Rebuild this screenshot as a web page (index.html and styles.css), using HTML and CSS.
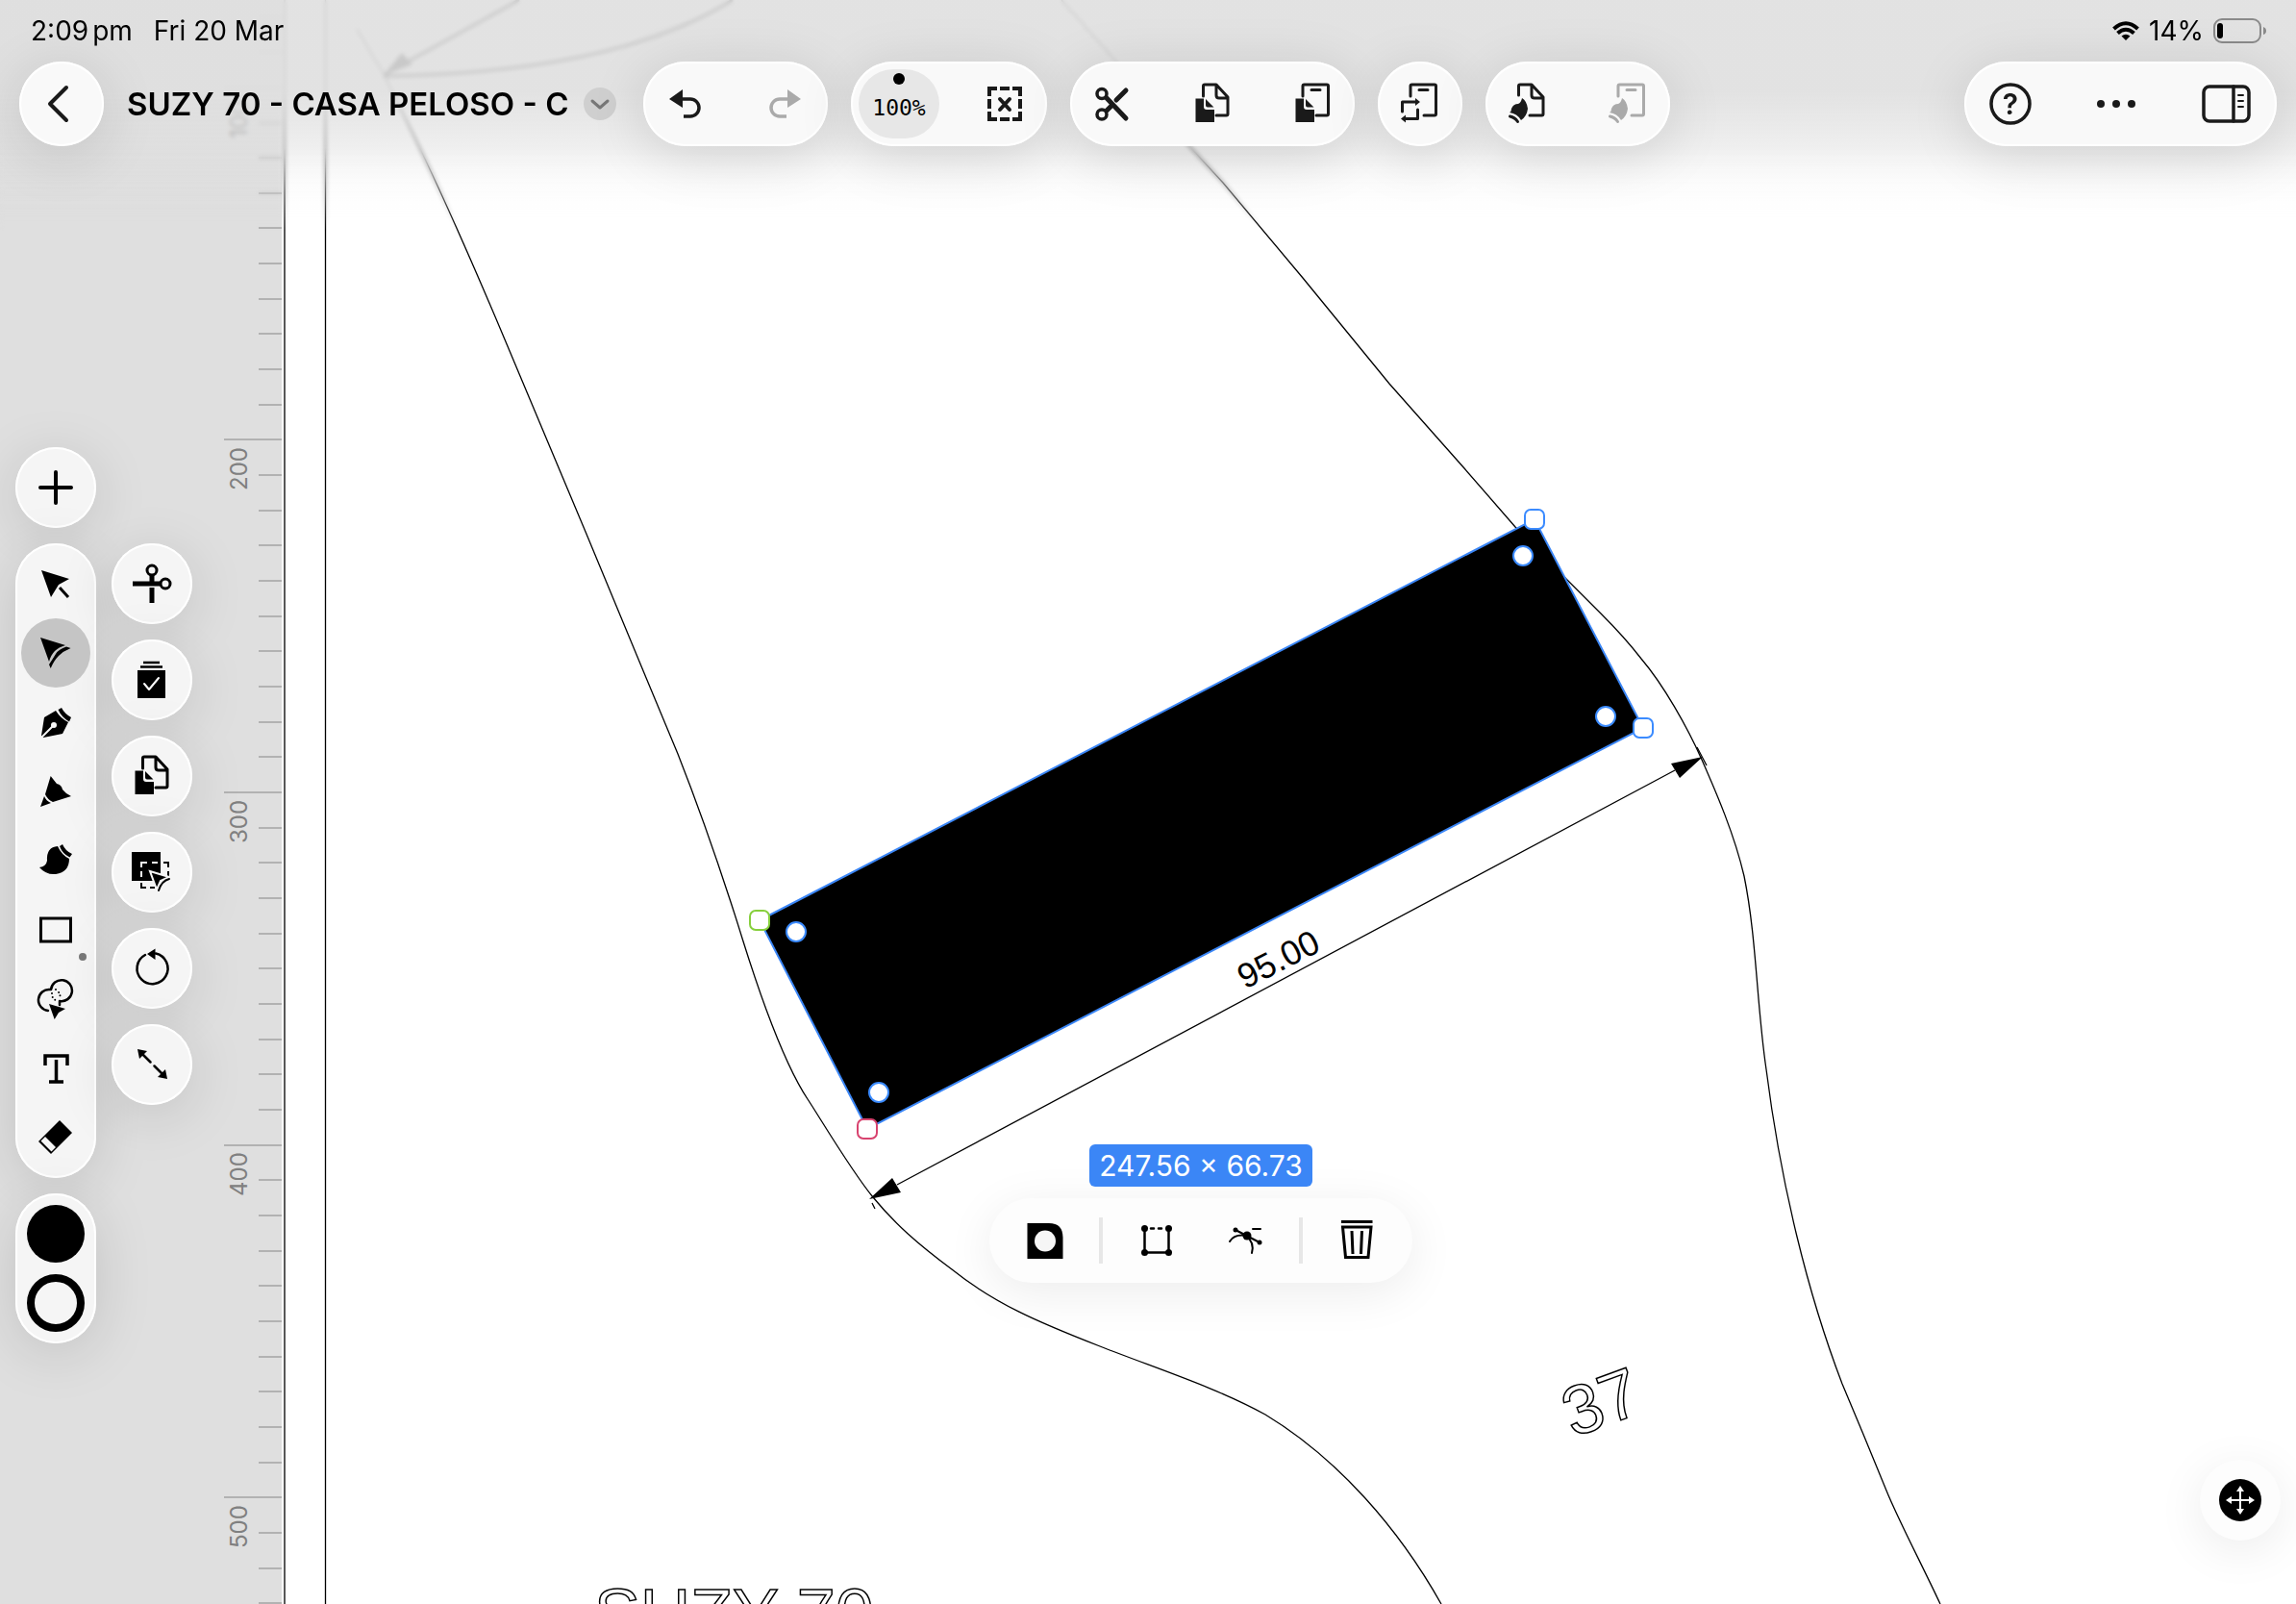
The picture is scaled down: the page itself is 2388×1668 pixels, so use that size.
FILE: index.html
```html
<!DOCTYPE html>
<html lang="en">
<head>
<meta charset="utf-8">
<title>SUZY 70 - CASA PELOSO - C</title>
<link rel="stylesheet" href="styles.css">
</head>
<body>
<svg class="defs" aria-hidden="true">
  <symbol id="copy" viewBox="0 0 48 48">
    <path class="line" d="M14.5 16V5.5q0-1.5 1.5-1.5H28L40 17v17.5q0 1.5-1.5 1.5H28M28 4v11q0 3 3 3h9"/>
    <path d="M6.5 18.5H15V27q0 3 3 3h8v13H6.5zM17 19l8.5 8.5H19q-2 0-2-2z"/>
  </symbol>
  <symbol id="board" viewBox="0 0 48 48">
    <path class="line" d="M14 16V5.5q0-1.5 1.5-1.5H39q1.5 0 1.5 1.5V34.5q0 1.5-1.5 1.5H28M23 9.5h9"/>
  </symbol>
  <symbol id="brushmark" viewBox="0 0 48 48">
    <path d="M18 18q-1 5-4 6q-5 0-7 5q0 3-2 4q8 1 12 8q6-4 7-12q-1-8-6-11z"/>
    <path class="line" d="M5.5 37q5 1 8 5.5"/>
  </symbol>
</svg>

<main class="app">
  <svg class="canvas" viewBox="0 0 2388 1668" preserveAspectRatio="xMinYMin slice" role="img" aria-label="Drawing canvas">
    <rect class="paper" x="293" y="0" width="2200" height="1668"/>
    <path class="ticks" d="M269 18h24M269 54h24M233 91h60M269 128h24M269 164h24M269 201h24M269 237h24M269 274h24M269 311h24M269 347h24M269 384h24M269 421h24M233 457h60M269 494h24M269 531h24M269 567h24M269 604h24M269 641h24M269 677h24M269 714h24M269 751h24M269 787h24M233 824h60M269 861h24M269 897h24M269 934h24M269 971h24M269 1007h24M269 1044h24M269 1081h24M269 1117h24M269 1154h24M233 1191h60M269 1227h24M269 1264h24M269 1301h24M269 1337h24M269 1374h24M269 1411h24M269 1447h24M269 1484h24M269 1521h24M233 1557h60M269 1594h24M269 1631h24M269 1667h24"/>
    <g class="ruler-text">
      <text transform="translate(257 144) rotate(-90)">100</text>
      <text transform="translate(257 510) rotate(-90)">200</text>
      <text transform="translate(257 877) rotate(-90)">300</text>
      <text transform="translate(257 1244) rotate(-90)">400</text>
      <text transform="translate(257 1610) rotate(-90)">500</text>
    </g>
    <path class="thin" d="M296 0V1668M338.5 0V1668"/>
    <path class="thin" d="M371 30L399 77L421 122C450 180 485 258 525 353L609 553L670 700L705 784C720 822 745 892 760 938S780 1004 797 1050S828 1125 840 1143S885 1217 908 1245S955 1294 990 1320C1035 1356 1080 1375 1144 1400S1265 1443 1316 1471C1392 1517 1455 1590 1499 1668"/>
    <path class="thin" d="M1104 0L1160 63L1237 152L1272 190L1355 289L1445 399L1523 487L1576 548L1630 603L1665 638Q1690 663 1707 685C1730 712 1755 756 1770 790S1804 868 1814 911C1827 975 1827 1045 1837 1112C1852 1230 1880 1345 1916 1439C1930 1472 1949 1518 1962 1550S1998 1625 2018 1668"/>
    <path class="thin faint" d="M399 78L540 0M399 79Q640 76 762 0"/>
    <path d="M399 78L418 55L429 67z"/>
    <path class="shape" d="M790 957L1596 540L1709 757L902 1174z"/>
    <path class="thin" d="M933 1232L1742 801M1765 777L1775 796M907 1251L910 1257"/>
    <path d="M904 1247L928 1225L937 1240zM1771 787L1738 794L1747 809z"/>
    <text class="measure" transform="translate(1295 1029) rotate(-27)">95.00</text>
    <text class="outlined" transform="translate(1636 1495) rotate(-20)">37</text>
    <text class="outlined" x="618" y="1703">SUZY 70</text>
    <g class="handle">
      <rect x="1586" y="530" width="20" height="20" rx="6"/>
      <rect x="1699" y="747" width="20" height="20" rx="6"/>
      <rect class="first" x="780" y="947" width="20" height="20" rx="6"/>
      <rect class="last" x="892" y="1164" width="20" height="20" rx="6"/>
      <circle cx="1584" cy="578" r="10"/><circle cx="1670" cy="745" r="10"/>
      <circle cx="828" cy="969" r="10"/><circle cx="914" cy="1136" r="10"/>
    </g>
  </svg>
  <div class="veil"></div>

  <div class="status">
    <span class="clock">2:09<span class="ampm">pm</span></span><span>Fri 20 Mar</span>
    <span class="power">
      <svg class="wifi" viewBox="0 0 28 20"><path d="M14 20L9.5 15.5Q14 12 18.5 15.5z"/><path class="arc" d="M5.5 12.5Q14 5 22.500 12.5M1.500 8Q14-3.500 26.500 8"/></svg>
      <span>14%</span>
      <svg class="battery" viewBox="0 0 56 26"><rect class="shell" x="1" y="1" width="48" height="24" rx="8"/><path class="nub" d="M52 9q3 1 3 4t-3 4z"/><rect x="4" y="5" width="6" height="16" rx="3"/></svg>
    </span>
  </div>

  <header class="bar">
    <button class="pill round" aria-label="Back"><svg class="icon" viewBox="0 0 48 48"><path class="line thick" d="M29 7L12 24L29 41"/></svg></button>
    <button class="title"><span>SUZY 70 - CASA PELOSO - C</span><svg class="chevron" viewBox="0 0 34 34"><circle cx="17" cy="17" r="17"/><path d="M9 14L17 21L25 14"/></svg></button>
    <div class="pill group">
      <button aria-label="Undo"><svg class="icon" viewBox="0 0 48 48"><path d="M7 19L21 9v19z"/><path class="line butt heavy" d="M20 19h9a9 9 0 0 1 0 18h-7"/></svg></button>
      <button aria-label="Redo" disabled><svg class="icon" viewBox="0 0 48 48"><path d="M40 19L26 9v19z"/><path class="line butt heavy" d="M27 19h-9a9 9 0 0 0 0 18h7"/></svg></button>
    </div>
    <div class="pill group">
      <button class="zoom"><span class="level">100%</span></button>
      <button aria-label="Deselect"><svg class="icon" viewBox="0 0 48 48"><path class="line butt thick" d="M8 16V8h8M19 8h10M32 8h8v8M40 19v10M40 32v8h-8M29 40H19M16 40H8v-8M8 29V19"/><path class="line thick" d="M19 19l10 11M29 19L19 30"/></svg></button>
    </div>
    <div class="pill group">
      <button aria-label="Cut"><svg class="icon" viewBox="0 0 48 48"><circle class="line heavy" cx="13" cy="13.5" r="5"/><circle class="line heavy" cx="13" cy="35" r="5"/><path class="line blade" d="M18 18L38 39M38 10L28 20M18 31L24 25"/></svg></button>
      <button aria-label="Copy"><svg class="icon"><use href="#copy"/></svg></button>
      <button aria-label="Paste"><svg class="icon" viewBox="0 0 48 48"><use href="#board"/><path d="M6.5 18.5H15V27q0 3 3 3h8v13H6.5zM17 19l8.5 8.5H19q-2 0-2-2z"/></svg></button>
    </div>
    <button class="pill round" aria-label="Paste and replace"><svg class="icon" viewBox="0 0 48 48"><use href="#board"/><path class="line" d="M5.5 32V22H20M21.5 30v9.5H8"/><path d="M19 18l5 4-5 4zM9 35.5l-5 4 5 4z"/></svg></button>
    <div class="pill group">
      <button aria-label="Copy style"><svg class="icon" viewBox="0 0 48 48"><path class="line" d="M14.5 15V5.5q0-1.5 1.5-1.5H28L40 17v17.5q0 1.5-1.5 1.5H26M28 4v11q0 3 3 3h9"/><use href="#brushmark"/></svg></button>
      <button aria-label="Paste style" disabled><svg class="icon" viewBox="0 0 48 48"><use href="#board"/><use href="#brushmark"/></svg></button>
    </div>
    <div class="pill group menu">
      <button class="help" aria-label="Help"><svg class="icon" viewBox="0 0 48 48"><circle class="line heavy" cx="24" cy="24" r="20"/><text class="mark" x="24" y="35">?</text></svg></button>
      <button class="more" aria-label="More"><svg class="icon" viewBox="0 0 48 48"><circle cx="8" cy="24" r="4"/><circle cx="24" cy="24" r="4"/><circle cx="40" cy="24" r="4"/></svg></button>
      <button class="panel" aria-label="Inspector"><svg class="icon wide" viewBox="0 0 56 48"><rect class="line heavy" x="4" y="6" width="47" height="36" rx="6"/><path class="line heavy" d="M35 6v36"/><path class="line slim" d="M40 15h5M40 21h5M40 27h5"/></svg></button>
    </div>
  </header>

  <div class="tools">
    <nav class="column" aria-label="Tools">
      <button class="pill tool" aria-label="Add"><svg class="icon" viewBox="0 0 48 48"><path class="line thick" d="M24 8v32M8 24h32"/></svg></button>
      <div class="pill stack">
        <button aria-label="Select"><svg class="icon" viewBox="0 0 48 48"><path d="M9 10L38 19L27 25L19 38z"/><path class="line butt" d="M28 28l9 10"/></svg></button>
        <button class="active" aria-label="Edit nodes"><svg class="icon" viewBox="0 0 48 48"><path d="M8 8L34 16Q27 18 23 22T17 33z"/><path d="M39.5 19L35 17.5Q27 20 24 25T17 36L18.7 40Q22 32 27 27T39.5 19z"/></svg></button>
        <button aria-label="Pen"><svg class="icon" viewBox="0 0 48 48"><path d="M9 38L12 19L24 12Q29 20 37 24L31 36L11 40z"/><path d="M26.5 11L30 9Q33 15 40 19L38 23.5Q30 19 26.5 11z"/><circle class="cut" cx="22" cy="27" r="3"/><path class="score" d="M9 40L22 27"/></svg></button>
        <button aria-label="Node pencil"><svg class="icon" viewBox="0 0 48 48"><path d="M18.7 8L25 16Q30 17 31 22Q34 26 40 29L21 35Q15 32 13 27z"/><path d="M8 40L12 29Q14 34 19 36z"/></svg></button>
        <button aria-label="Brush"><svg class="icon" viewBox="0 0 48 48"><path d="M7 31Q14 30 15 24Q14 10 26 9Q30 18 38 22Q38 36 24 38Q14 39 7 31z"/><path d="M28 9L31 7Q34 14 41 17L38.5 20.5Q31 17 28 9z"/></svg></button>
        <button class="has-more" aria-label="Rectangle"><svg class="icon" viewBox="0 0 48 48"><rect class="line butt" x="8.5" y="12" width="31" height="24"/></svg></button>
        <button aria-label="Shape builder"><svg class="icon" viewBox="0 0 48 48"><path class="line mid" d="M19 14A11 11 0 1 1 28 26V30M18 14A11 11 0 0 0 16 36"/><path class="line dots" d="M20 18Q19 22 25 26M24 14Q30 18 28 24"/><path d="M17 29L34 34L27 38L22.7 45z"/></svg></button>
        <button aria-label="Text"><svg class="icon" viewBox="0 0 48 48"><path class="line butt heavy" d="M13 21V11H36V21M24.5 15V37M17 38H32"/></svg></button>
        <button aria-label="Eraser"><svg class="icon" viewBox="0 0 48 48"><path d="M28 6L41 19L19 41L6 28z"/><path class="cut" d="M13 23L24 34L19.5 38.5L8.5 27.5z"/></svg></button>
      </div>
      <div class="pill stack">
        <button aria-label="Fill colour"><span class="swatch fill"></span></button>
        <button aria-label="Stroke colour"><span class="swatch ring"></span></button>
      </div>
    </nav>
    <nav class="column second" aria-label="Tool options">
      <button class="pill tool" aria-label="Split path"><svg class="icon" viewBox="0 0 48 48"><circle class="line" cx="24" cy="10" r="5"/><circle class="line" cx="38" cy="24" r="5"/><path class="line butt blade" d="M24 16v8M33 24H4M24 28v16"/></svg></button>
      <button class="pill tool" aria-label="Multi select"><svg class="icon" viewBox="0 0 48 48"><path class="line mid butt" d="M15 6h17M12 10.5h23"/><path d="M9 14h29v29H9z"/><path class="tick" d="M16 28L21 34L31 22"/></svg></button>
      <button class="pill tool" aria-label="Duplicate"><svg class="icon"><use href="#copy"/></svg></button>
      <button class="pill tool" aria-label="Select within"><svg class="icon" viewBox="0 0 48 48"><path d="M3 3h30v30H3z"/><path class="score" d="M13 19v-5h6M24 14h6M13 23v6"/><path class="line slim butt" d="M36 14h5v5M41 23v5M13 35v5h5M22 40h5"/><path class="halo" d="M22 23L42 29L33 33L29 42z"/><path class="line slim" d="M42 31Q34 33 31 43"/></svg></button>
      <button class="pill tool" aria-label="Reverse path"><svg class="icon" viewBox="0 0 48 48"><path class="line mid" d="M17 10A16 16 0 1 0 28 8.5"/><path d="M19 9L27.5 3.5V15z"/></svg></button>
      <button class="pill tool" aria-label="Extend"><svg class="icon" viewBox="0 0 48 48"><path class="line mid" d="M13 12L22.5 21.5M26.5 25.5L36 35"/><path d="M9 8L19 10L11 18zM40 39L30 37L38 29z"/></svg></button>
    </nav>
  </div>

  <section class="context" aria-label="Selection">
    <output class="size">247.56 × 66.73</output>
    <div class="pill actions">
      <button aria-label="Mask"><svg class="icon" viewBox="0 0 48 48"><path d="M5.5 6H28Q42.5 6 42.5 21V43H5.5z"/><circle class="cut" cx="24" cy="24.5" r="11"/></svg></button>
      <span class="divider"></span>
      <button aria-label="Transform"><svg class="icon" viewBox="0 0 48 48"><path class="line mid" d="M11.5 11.5V36.5H36.5V11.5M18 11.5h3M26 11.5h3"/><circle cx="11.5" cy="11.5" r="3.5"/><circle cx="36.5" cy="11.5" r="3.5"/><circle cx="11.5" cy="36.5" r="3.5"/><circle cx="36.5" cy="36.5" r="3.5"/></svg></button>
      <button aria-label="Remove node"><svg class="icon" viewBox="0 0 48 48"><path class="line slim" d="M8 25Q13 17 25 19Q34 26 31 37M14 13L39 26M32 12h8"/><circle cx="26" cy="19" r="4.5"/><circle cx="14" cy="13" r="2.5"/><circle cx="39" cy="26" r="2.5"/></svg></button>
      <span class="divider"></span>
      <button aria-label="Delete"><svg class="icon" viewBox="0 0 48 48"><path class="line butt" d="M8 4.5H40.5M9.5 10H39L36 41.5H12.5zM19 14L20 38M29.5 14L28.5 38"/></svg></button>
    </div>
  </section>

  <button class="pill tool move" aria-label="Move view"><svg class="icon" viewBox="0 0 48 48"><circle cx="24" cy="24" r="22"/><path class="arrows" d="M24 13V35M13 24H35"/><path class="cut" d="M24 9l4 6h-8zM24 39l4-6h-8zM9 24l6-4v8zM39 24l-6-4v8z"/></svg></button>
</main>
</body>
</html>
```
FILE: styles.css
```css
* { box-sizing: border-box; }
body {
  margin: 0;
  font-family: Inter, "Liberation Sans", sans-serif;
  color: #000;
}
button {
  margin: 0;
  padding: 0;
  border: 0;
  background: none;
  color: inherit;
  font: inherit;
  display: flex;
  align-items: center;
  justify-content: center;
}
.defs { position: absolute; width: 0; height: 0; }
.app {
  position: relative;
  min-height: 100vh;
  overflow: hidden;
  background: #dfdfdf;
}

/* Canvas */
.canvas { position: absolute; inset: 0; width: 100%; height: 100%; }
.paper { fill: #fff; }
.thin { fill: none; stroke: #000; stroke-width: 1.3; }
.faint { stroke-width: 3; }
.ticks { fill: none; stroke: #b2b2b2; stroke-width: 2; }
.ruler-text { font-size: 24px; font-weight: 400; fill: #808080; }
.shape { fill: #000; stroke: #3b86f6; stroke-width: 2; }
.measure { font: 36px "Liberation Sans", Arial, sans-serif; }
.outlined {
  font: 72px "Liberation Sans", Arial, sans-serif;
  fill: none;
  stroke: #000;
  stroke-width: 1.5;
}
.handle { fill: #fff; stroke: #3b8bff; stroke-width: 2; }
.handle .first { stroke: #86cf3c; }
.handle .last { stroke: #d8436f; }
.veil {
  position: absolute;
  inset: 0 0 auto;
  height: 240px;
  background: linear-gradient(rgba(223, 223, 223, .9) 0 40%, rgba(223, 223, 223, .5) 64%, rgba(223, 223, 223, .15) 82%, rgba(223, 223, 223, 0));
  backdrop-filter: blur(2px);
  -webkit-mask-image: linear-gradient(#000 64%, transparent);
  mask-image: linear-gradient(#000 64%, transparent);
}

/* Status bar */
.status {
  position: relative;
  display: flex;
  align-items: center;
  gap: 22px;
  height: 64px;
  padding: 0 30px 0 32px;
  font-size: 28px;
  font-weight: 400;
}
.ampm { margin-left: 4px; }
.power { display: flex; align-items: center; gap: 10px; margin-left: auto; }
.wifi { width: 28px; height: 20px; }
.wifi .arc { fill: none; stroke: #000; stroke-width: 4; }
.battery { width: 56px; height: 26px; }
.shell { fill: none; stroke: #8a8a8a; stroke-width: 2; }
.nub { fill: #8a8a8a; }

/* Shared surfaces */
.pill {
  border-radius: 44px;
  background: #f9f9f9;
  box-shadow: inset 0 0 0 2px #fff, 0 10px 60px rgba(0, 0, 0, .13);
}
.icon { width: 48px; height: 48px; fill: currentColor; display: block; flex: none; }
.icon.wide { width: 56px; }
.line {
  fill: none;
  stroke: currentColor;
  stroke-width: 3;
  stroke-linecap: round;
  stroke-linejoin: round;
}
.heavy { stroke-width: 3.5; }
.thick { stroke-width: 4; }
.blade { stroke-width: 5; }
.mid { stroke-width: 2.5; }
.slim { stroke-width: 2; }
.butt { stroke-linecap: butt; stroke-linejoin: miter; }
.dots { stroke-width: 2; stroke-dasharray: 0 4; }
.cut { fill: #f6f6f6; }
.score { fill: none; stroke: #f6f6f6; stroke-width: 2; }
.tick { fill: none; stroke: #fff; stroke-width: 2; stroke-linecap: round; stroke-linejoin: round; }
.halo { stroke: #f6f6f6; stroke-width: 2; }

/* Top bar */
.bar {
  position: relative;
  display: flex;
  align-items: center;
  gap: 24px;
  padding: 0 20px;
  color: #1a1a1a;
}
.round { width: 88px; height: 88px; flex: none; }
.title {
  width: 513px;
  padding-right: 4px;
  justify-content: space-between;
  white-space: nowrap;
  font-size: 33px;
  font-weight: 600;
  color: #000;
}
.chevron { width: 34px; height: 34px; fill: #cfcfcf; }
.chevron path { fill: none; stroke: #777; stroke-width: 3; stroke-linecap: round; stroke-linejoin: round; }
.group { display: flex; gap: 16px; flex: none; }
.group button { width: 88px; height: 88px; }
.group button:disabled { color: #aaa; }
.group .zoom { width: 100px; }
.level {
  position: relative;
  display: flex;
  align-items: center;
  justify-content: center;
  width: 84px;
  height: 72px;
  border-radius: 36px;
  background: #e7e7e7;
  color: #000;
  font: 23px/32px "DejaVu Sans Mono", monospace;
  padding-top: 7px;
}
.level::before {
  content: "";
  position: absolute;
  top: 4px;
  left: 36px;
  width: 12px;
  height: 12px;
  border-radius: 50%;
  background: #000;
}
.menu { margin-left: auto; gap: 0; }
.group .help { width: 96px; }
.group .more { width: 124px; }
.group .panel { width: 105px; }
.mark { font-size: 30px; font-weight: 600; text-anchor: middle; }

/* Side tools */
.tools {
  position: relative;
  display: flex;
  gap: 16px;
  width: max-content;
  padding: 313px 16px 0;
}
.column { display: flex; flex-direction: column; gap: 16px; }
.second { padding-top: 100px; }
.tools .pill { background: #f5f5f5; }
.tool { width: 84px; height: 84px; }
.stack { width: 84px; padding: 6px; }
.stack button { position: relative; width: 72px; height: 72px; border-radius: 50%; }
.stack .active { background: #c5c5c5; }
.has-more::after {
  content: "";
  position: absolute;
  right: 4px;
  bottom: 4px;
  width: 8px;
  height: 8px;
  border-radius: 50%;
  background: #777;
}
.swatch { width: 60px; height: 60px; border-radius: 50%; }
.fill { background: #000; }
.ring { border: 8px solid #000; }

/* Floating selection menu */
.context {
  position: absolute;
  left: 1029px;
  top: 1190px;
  display: flex;
  flex-direction: column;
  align-items: center;
  gap: 12px;
}
.size {
  position: relative;
  z-index: 1;
  padding: 0 10px;
  border-radius: 6px;
  background: #3b86f6;
  color: #fff;
  font-size: 30px;
  font-weight: 400;
  line-height: 44px;
  white-space: nowrap;
}
.actions { display: flex; align-items: center; padding: 0 12px; }
.actions button { width: 92px; height: 88px; }
.divider { width: 4px; height: 48px; margin: 0 10px; background: #e7e7e7; }
.context .pill, .move { background: #fdfdfd; box-shadow: 0 10px 50px rgba(0, 0, 0, .08); }
.move { position: absolute; right: 16px; bottom: 66px; }
.arrows { fill: none; stroke: #fff; stroke-width: 2; }
.move .cut { fill: #fff; }
```
